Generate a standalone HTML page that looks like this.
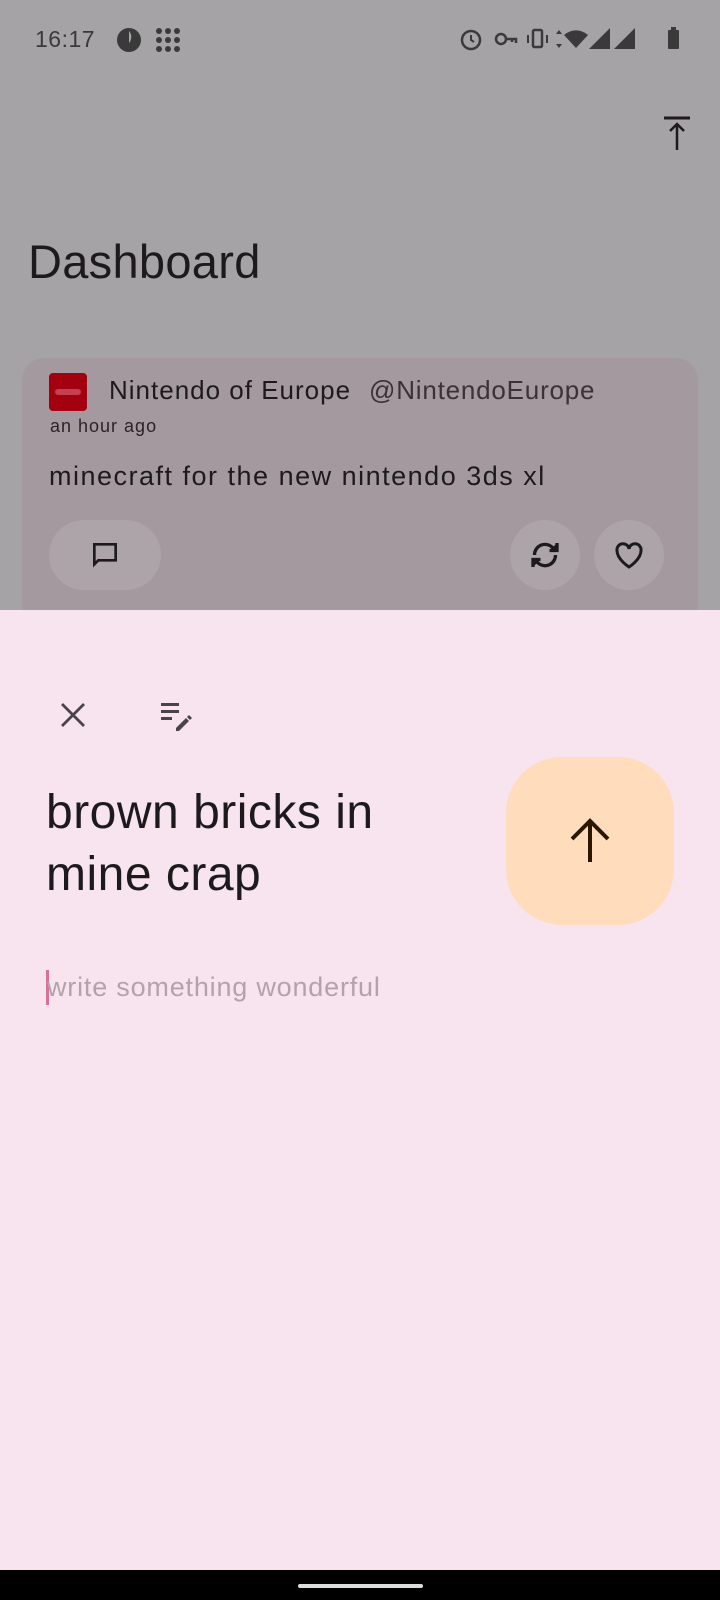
<!DOCTYPE html>
<html><head><meta charset="utf-8"><style>
*{margin:0;padding:0;box-sizing:border-box}
body{width:720px;height:1600px;position:relative;overflow:hidden;background:#a6a3a6;font-family:"Liberation Sans",sans-serif;color:#1d1a1c}
.a{position:absolute;white-space:nowrap}
</style></head><body>
<div class="a" style="left:35px;top:26px;font-size:23px;color:#3a3a3a;letter-spacing:.5px">16:17</div>
<svg class="a" style="left:116px;top:27px" width="26" height="26" viewBox="0 0 26 26"><circle cx="13" cy="13" r="12" fill="#3a3a3a"/><path d="M13 4a9 9 0 0 1 0 12z" fill="#a6a3a6"/></svg>
<svg class="a" style="left:155px;top:27px" width="26" height="26" viewBox="0 0 26 26" fill="#3a3a3a"><circle cx="4" cy="4" r="3"/><circle cx="13" cy="4" r="3"/><circle cx="22" cy="4" r="3"/><circle cx="4" cy="13" r="3"/><circle cx="13" cy="13" r="3"/><circle cx="22" cy="13" r="3"/><circle cx="4" cy="22" r="3"/><circle cx="13" cy="22" r="3"/><circle cx="22" cy="22" r="3"/></svg>
<svg class="a" style="left:458px;top:26px" width="230" height="26" viewBox="0 0 230 26" fill="#3a3a3a" stroke="#3a3a3a">
<circle cx="13" cy="14" r="9" fill="none" stroke-width="2.5"/><path d="M13 9v5l3 2" fill="none" stroke-width="2"/>
<circle cx="43" cy="13" r="5" fill="none" stroke-width="2.5"/><path d="M48 13h10v4M54 13v3" fill="none" stroke-width="2.5"/>
<rect x="75" y="4" width="9" height="17" rx="1.5" fill="none" stroke-width="2.5"/><path d="M70 9v8M89 9v8" stroke-width="2"/>
<path d="M101 4l3 4h-6zM101 22l3-4h-6z" stroke="none"/><path d="M106 9a18 18 0 0 1 24 0l-12 13z" stroke="none"/>
<path d="M152 2v21h-21z" stroke="none"/><path d="M177 2v21h-21z" stroke="none"/><rect x="210" y="4" width="11" height="19" rx="1" stroke="none"/><rect x="213" y="1" width="5" height="4" stroke="none"/></svg>
<svg class="a" style="left:663px;top:116px" width="28" height="36" viewBox="0 0 28 36" fill="none" stroke="#1d1a1c" stroke-width="3"><path d="M1 2h26"/><path d="M14 34V10M7 15l7-7 7 7" stroke-width="2.5"/></svg>
<div class="a" style="left:28px;top:234px;font-size:47px;color:#1d1a1c;letter-spacing:.3px">Dashboard</div>
<div class="a" style="left:22px;top:358px;width:676px;height:270px;border-radius:22px;background:#a4999e"></div>
<div class="a" style="left:49px;top:373px;width:38px;height:38px;border-radius:4px;background:#a30010"><div style="margin:16px 6px;height:6px;border-radius:3px;background:#c44050"></div></div>
<div class="a" style="left:109px;top:375px;font-size:26px;color:#1d1a1c;letter-spacing:1px">Nintendo of Europe</div>
<div class="a" style="left:369px;top:375px;font-size:26px;color:#3a3236;letter-spacing:.8px">@NintendoEurope</div>
<div class="a" style="left:50px;top:416px;font-size:18px;color:#2a2427;letter-spacing:1px">an hour ago</div>
<div class="a" style="left:49px;top:461px;font-size:27px;color:#1d1a1c;letter-spacing:1.5px">minecraft for the new nintendo 3ds xl</div>
<div class="a" style="left:49px;top:520px;width:112px;height:70px;border-radius:35px;background:#aca4a8"></div>
<svg class="a" style="left:89px;top:539px" width="32" height="32" viewBox="0 0 24 24" fill="none" stroke="#1d1a1c" stroke-width="2"><path d="M4 4h16v12H7l-3 3z"/></svg>
<div class="a" style="left:510px;top:520px;width:70px;height:70px;border-radius:35px;background:#aca4a8"></div>
<svg class="a" style="left:527px;top:537px" width="36" height="36" viewBox="0 0 24 24" fill="none" stroke="#1d1a1c" stroke-width="2.2"><path d="M5 12a7 7 0 0 1 12-5l2 2M19 12a7 7 0 0 1-12 5l-2-2"/><path d="M20 4v5h-5M4 20v-5h5" fill="#1d1a1c"/></svg>
<div class="a" style="left:594px;top:520px;width:70px;height:70px;border-radius:35px;background:#aca4a8"></div>
<svg class="a" style="left:611px;top:537px" width="36" height="36" viewBox="0 0 24 24" fill="none" stroke="#1d1a1c" stroke-width="2"><path d="M12 20s-8-5-8-11a4 4 0 0 1 8-1 4 4 0 0 1 8 1c0 6-8 11-8 11z"/></svg>
<div class="a" style="left:0;top:610px;width:720px;height:960px;background:#f7e4ee"></div>
<svg class="a" style="left:60px;top:702px" width="26" height="26" viewBox="0 0 26 26" stroke="#4a4347" stroke-width="2.8"><path d="M2 2l22 22M24 2L2 24"/></svg>
<svg class="a" style="left:161px;top:703px" width="34" height="30" viewBox="0 0 34 30" fill="#4a4347"><rect x="0" y="0" width="18" height="3"/><rect x="0" y="7" width="18" height="3"/><rect x="0" y="14" width="11" height="3"/><path d="M15 25l10-10 3 3-10 10h-3z"/><path d="M26 14l2-2 3 3-2 2z"/></svg>
<div class="a" style="left:46px;top:782px;font-size:48px;line-height:62px;color:#1d1a1c;letter-spacing:.5px">brown bricks in<br>mine crap</div>
<div class="a" style="left:506px;top:757px;width:168px;height:168px;border-radius:56px;background:#ffdcbc"></div>
<svg class="a" style="left:568px;top:818px" width="44" height="46" viewBox="0 0 44 46" fill="none" stroke="#2a1700" stroke-width="4"><path d="M22 44V4M4 21L22 3l18 18"/></svg>
<div class="a" style="left:46px;top:970px;width:3px;height:35px;background:#d9709a"></div>
<div class="a" style="left:47px;top:972px;font-size:27px;color:#b4a1ac;letter-spacing:.8px">write something wonderful</div>
<div class="a" style="left:0;top:1570px;width:720px;height:30px;background:#000"></div>
<div class="a" style="left:298px;top:1584px;width:125px;height:4px;border-radius:2px;background:#ddd"></div>
</body></html>
